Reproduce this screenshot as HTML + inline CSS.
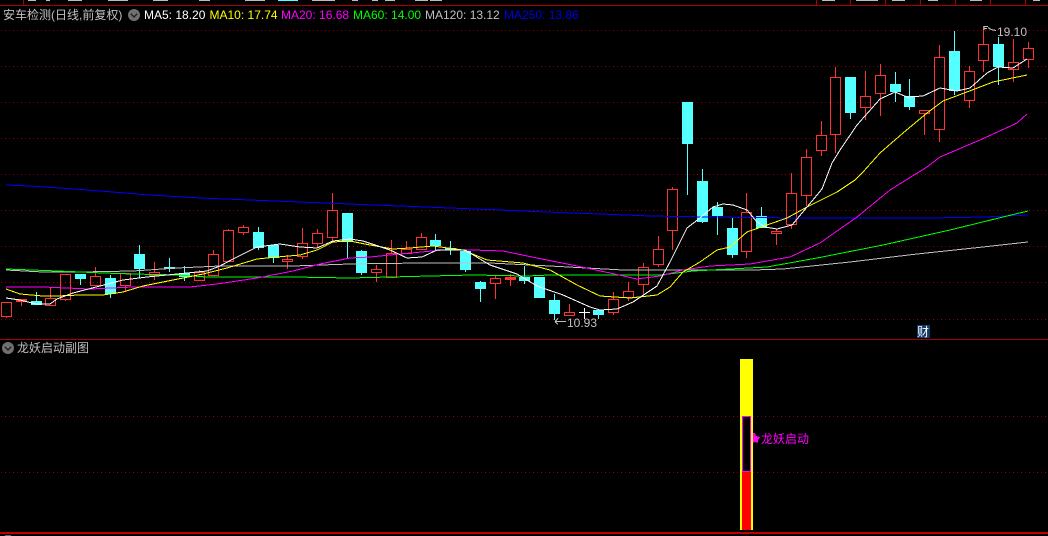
<!DOCTYPE html>
<html><head><meta charset="utf-8"><title>安车检测</title>
<style>
html,body{margin:0;padding:0;background:#000;width:1048px;height:536px;overflow:hidden}
svg{display:block}
text{font-family:"Liberation Sans","WenQuanYi Zen Hei","Noto Sans CJK SC",sans-serif;font-size:12px}
</style></head><body>
<svg width="1048" height="536" viewBox="0 0 1048 536" xmlns="http://www.w3.org/2000/svg">
<rect width="1048" height="536" fill="#000"/>
<g shape-rendering="crispEdges" fill="none">
<path stroke="#a80000" d="M0 5.5H1048M0 339.5H1048M23.5 0V5M816.5 0V5M850.5 0V5M885.5 0V5M920.5 0V5M955.5 0V5M990.5 0V5M1025.5 0V5"/>
<rect x="0" y="532" width="1048" height="2" fill="#c00000"/>
<rect x="5" y="535" width="6" height="1" fill="#666"/>
<path stroke="#8c0000" stroke-dasharray="1 3" d="M1 30.5H1048M1 66.5H1048M1 102.5H1048M1 138.5H1048M1 174.5H1048M1 210.5H1048M1 246.5H1048M1 282.5H1048M1 319.5H1048M1 416.5H1048M1 472.5H1048"/>
<path stroke="#bbb" d="M28 0.5h8M46 0.5h4M68 0.5h14M108 0.5h20M153 0.5h15M199 0.5h11M245 0.5h20M312 0.5h23M352 0.5h6M372 0.5h6M385 0.5h10M415 0.5h13M430 0.5h12M822 0.5h13M856 0.5h22M892 0.5h13M928 0.5h10M970 0.5h12M1033 0.5h7"/>
<path stroke="#54ffff" d="M278 0.5h20"/>

<!-- red candles -->
<path stroke="#ff3232" d="
M6.5 316V318M1.5 302.5h10v14h-10z
M21.5 301V306M16.5 299.5h10v1h-10z
M50.5 288V298M45.5 298.5h10v7h-10zM50.5 305V306
M65.5 274.5h-5v25h10v-25zM65.5 299V301
M95.5 267V276M90.5 276.5h10v9h-10z
M125.5 273.5h-5v12h10v-12zM125.5 285V292
M154.5 262V272M149.5 272.5h10v3h-10zM154.5 275V280
M199.5 270V272M194.5 272.5h10v8h-10z
M213.5 250V254M208.5 254.5h10v21h-10z
M228.5 229V230M223.5 230.5h10v31h-10z
M243.5 225V227M238.5 227.5h10v5h-10zM243.5 232V235
M287.5 255V259M282.5 259.5h10v2h-10zM287.5 261V269
M302.5 228V243M297.5 243.5h10v13h-10zM302.5 256V259
M317.5 229V233M312.5 233.5h10v10h-10zM317.5 243V248
M332.5 193V210M327.5 210.5h10v27h-10zM332.5 237V242
M376.5 265V269M371.5 269.5h10v3h-10zM376.5 272V282
M391.5 240V253M386.5 253.5h10v24h-10z
M406.5 241V249M401.5 249.5h10v4h-10z
M421.5 233V237M416.5 237.5h10v12h-10zM421.5 249V250
M495.5 275V278M490.5 278.5h10v5h-10zM495.5 283V299
M510.5 274V277M505.5 277.5h10v1h-10zM510.5 278V286
M569.5 304V312M564.5 312.5h10v3h-10z
M613.5 292V299M608.5 299.5h10v13h-10zM613.5 312V315
M628.5 282V291M623.5 291.5h10v6h-10zM628.5 297V301
M643.5 263V267M638.5 267.5h10v17h-10zM643.5 284V294
M658.5 236V249M653.5 249.5h10v15h-10zM658.5 264V267
M672.5 187V189M667.5 189.5h10v41h-10zM672.5 230V250
M746.5 193V212M741.5 212.5h10v39h-10zM746.5 251V258
M776.5 229V231M771.5 231.5h10v2h-10zM776.5 233V245
M791.5 173V193M786.5 193.5h10v31h-10zM791.5 224V229
M806.5 149V157M801.5 157.5h10v38h-10zM806.5 195V206
M821.5 121V135M816.5 135.5h10v15h-10zM821.5 150V156
M835.5 67V77M830.5 77.5h10v57h-10zM835.5 134V153
M865.5 71V96M860.5 96.5h10v11h-10zM865.5 107V120
M880.5 64V75M875.5 75.5h10v18h-10zM880.5 93V116
M924.5 110.5h-5v3h10v-3zM924.5 113V135
M939.5 45V57M934.5 57.5h10v72h-10zM939.5 129V142
M969.5 66V71M964.5 71.5h10v29h-10zM969.5 100V108
M983.5 26V44M978.5 44.5h10v16h-10zM983.5 60V72
M1013.5 39V62M1008.5 62.5h10v7h-10zM1013.5 69V82
M1028.5 42V48M1023.5 48.5h10v11h-10zM1028.5 59V68"/>
<path fill="#ff3232" d="M16 299h11v3h-11zM505 277h11v3h-11z"/>

<!-- cyan wicks -->
<path stroke="#54ffff" d="M36.5 292V305M80.5 274V285M110.5 275V298M139.5 245V278M169.5 258V272M184.5 266V281M258.5 227V250M273.5 245V263M347.5 213V258M361.5 250V275M435.5 234V251M450.5 241V255M465.5 251V272M480.5 281V302M524.5 266V284M539.5 277V298M554.5 294V320M598.5 310V319M687.5 102V195M702.5 169V223M717.5 202V235M732.5 218V258M761.5 207V228M850.5 77V119M895.5 72V102M909.5 79V110M954.5 31V95M998.5 37V85"/>
<!-- cyan bodies -->
<path fill="#54ffff" d="M31 301h11v4h-11zM75 274h11v5h-11zM105 278h11v16h-11zM134 254h11v15h-11zM164 267h11v2h-11zM179 273h11v4h-11zM253 232h11v16h-11zM268 245h11v13h-11zM342 213h11v29h-11zM356 251h11v22h-11zM430 240h11v6h-11zM445 248h11v2h-11zM460 251h11v19h-11zM475 282h11v7h-11zM519 277h11v4h-11zM534 277h11v21h-11zM549 300h11v14h-11zM593 310h11v5h-11zM682 102h11v42h-11zM697 181h11v41h-11zM712 207h11v9h-11zM727 228h11v27h-11zM756 216h11v12h-11zM845 77h11v36h-11zM890 84h11v8h-11zM904 96h11v11h-11zM949 51h11v40h-11zM993 44h11v23h-11z"/>
<!-- white cross -->
<path stroke="#fff" d="M579 312.5h11M584.5 308V319"/>

<!-- MA250 -->
<polyline stroke="#0000ff" stroke-width="1" points="6,185 30,186 60,188 100,191 150,195 200,198 250,200 300,202 350,204 400,206 450,208 500,210 546,212 600,214 650,216 710,217 800,218 930,218 985,217 1028,215"/>
<!-- MA120 -->
<polyline stroke="#c0c0c0" points="6,270 43,272 80,272 133,271 177,268 220,266 293,266 350,264 420,263 490,263 550,266 623,270 700,270 753,270 783,269 850,262 917,254 983,247 1028,242"/>
<!-- MA60 -->
<polyline stroke="#00ff00" points="6,269 58,271 103,273 133,274 177,275 207,277 293,277 350,278 430,276 473,275 527,276 550,275 660,275 693,271 767,267 817,258 883,245 950,230 1003,217 1028,211"/>
<!-- MA20 -->
<polyline stroke="#ff00ff" points="6,287 43,287 90,289 133,287 190,287 217,284 257,278 293,271 320,264 350,258 370,257 400,254 443,250 473,250 503,251 537,258 577,266 610,273 637,279 660,276 683,270 710,266 750,264 790,257 820,243 857,217 890,190 927,167 940,157 980,140 1017,123 1027,114"/>
<!-- MA10 -->
<polyline stroke="#ffff00" points="6,289 20,294 43,296 57,296 80,295 103,295 123,292 143,286 173,280 203,274 227,268 257,259 277,257 300,255 317,250 333,242 350,241 370,245 393,249 410,248 433,246 463,250 487,260 523,263 550,270 577,285 600,296 630,298 657,295 670,287 683,272 700,262 717,250 730,247 747,232 767,225 787,218 807,207 837,192 855,180 863,172 880,153 903,133 927,113 943,101 967,92 993,82 1027,75"/>
<!-- MA5 -->
<polyline stroke="#ffffff" points="6,298 20,300 36,304 50,304 57,299 73,293 100,286 123,280 147,277 177,274 207,271 220,266 233,259 257,247 280,244 300,247 317,248 333,241 350,239 363,241 390,250 407,258 422,257 437,250 465,250 490,265 517,274 537,286 563,295 590,307 600,310 617,309 633,302 657,286 670,262 687,228 700,218 713,207 723,204 733,205 747,210 757,222 765,227 777,229 792,225 807,207 822,189 832,163 840,150 857,125 880,99 895,92 907,97 923,96 940,88 957,91 970,88 987,73 998,67 1013,68 1027,59"/>

<!-- sub panel bar -->
<rect x="740" y="359" width="13" height="171" fill="#ffff00"/>
<rect x="742" y="472" width="9" height="58" fill="#ff0000"/>
<rect x="742.5" y="416.5" width="8" height="55" fill="#000" stroke="#ff00ff"/>
<polygon points="753,433 755,433 756,436 760,437 758,440 758,443 755,442 753,443" fill="#ff00ff"/>

<!-- price arrows -->
<path stroke="#c0c0c0" d="M555 321.5H566M555 321.5l3-3M555 321.5l3 3"/>
<path stroke="#c0c0c0" d="M984 26.5h4M984 26V30M984 28.5h3M988 27.5l3 2 5 1"/>
<rect x="917" y="325" width="13" height="13" fill="#0f3a66"/>
</g>

<!-- legend icons -->
<circle cx="134" cy="15" r="6" fill="#707070"/>
<path d="M130.8 13.8L134 17L137.2 13.8" fill="none" stroke="#222" stroke-width="1.4"/>
<circle cx="8" cy="348" r="6" fill="#707070"/>
<path d="M4.8 346.8L8 350L11.2 346.8" fill="none" stroke="#222" stroke-width="1.4"/>

<!-- texts -->
<text x="3" y="19" fill="#c0c0c0">安车检测(日线,前复权)</text>
<text x="144" y="19" fill="#ffffff">MA5: 18.20</text>
<text x="209.500" y="19" fill="#ffff00">MA10: 17.74</text>
<text x="281" y="19" fill="#ff00ff">MA20: 16.68</text>
<text x="353" y="19" fill="#00ff00">MA60: 14.00</text>
<text x="425" y="19" fill="#c0c0c0">MA120: 13.12</text>
<text x="504" y="19" fill="#0000e8">MA250: 13.86</text>
<text x="17" y="352" fill="#c0c0c0">龙妖启动副图</text>
<text x="761" y="443" fill="#ff00ff">龙妖启动</text>
<text x="567" y="327" fill="#c0c0c0">10.93</text>
<text x="997" y="36" fill="#c0c0c0">19.10</text>
<text x="917" y="336" fill="#ffffff">财</text>
</svg>
</body></html>
